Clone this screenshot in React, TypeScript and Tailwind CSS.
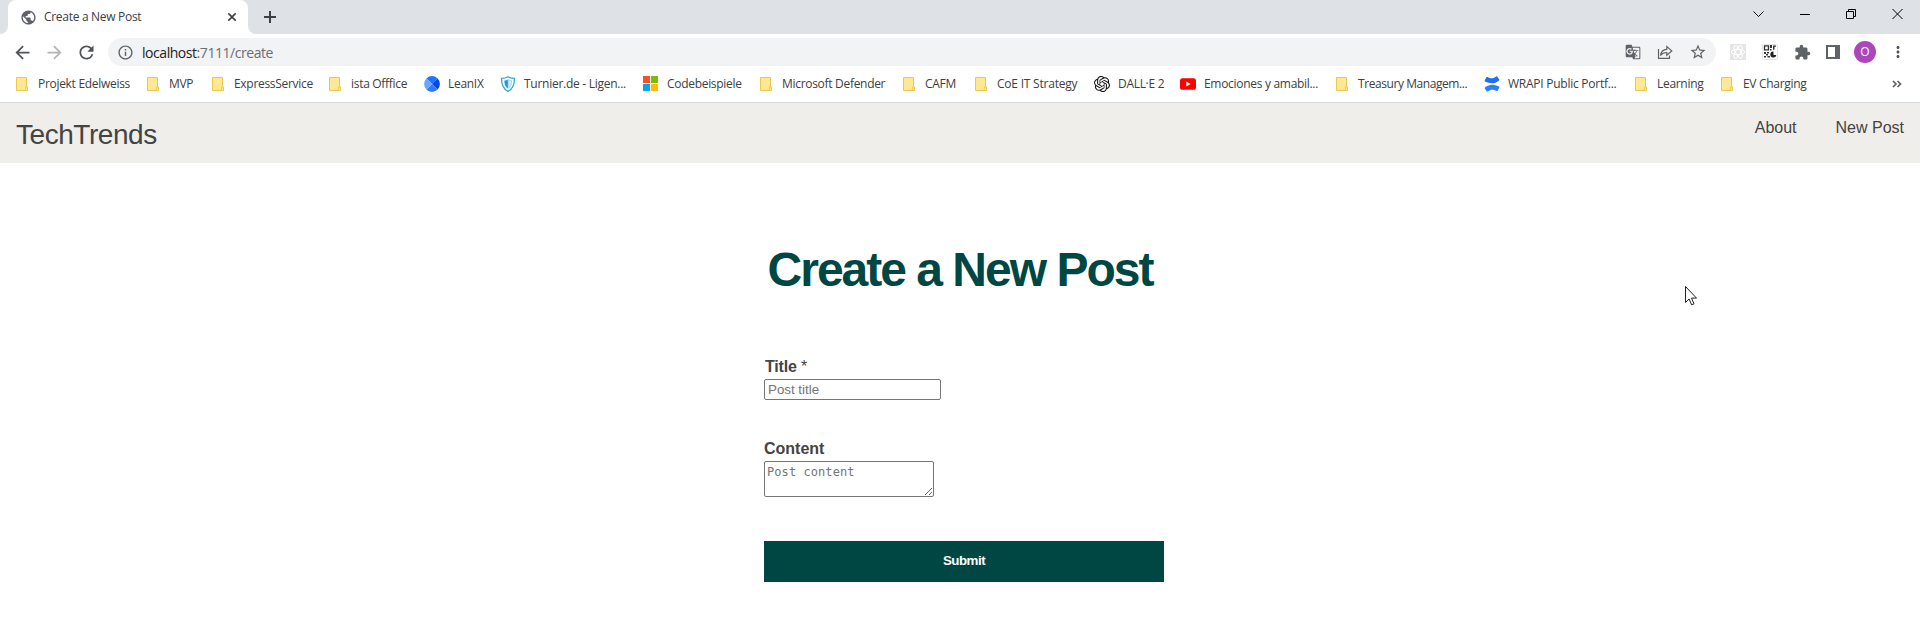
import React from "react";
import { SiOpenai } from "react-icons/si";
import { MdPublic, MdArrowBack, MdArrowForward, MdRefresh, MdInfoOutline, MdStarBorder, MdExtension, MdMoreVert, MdGTranslate } from "react-icons/md";

const Folder = () => (
  <svg width="16" height="16" viewBox="0 0 16 16">
    <path d="M2.500 1.500h10v9.500h1v3.500h-11z" fill="#ffe793" stroke="#ebc84d" />
    <path d="M11.500 14.500v-3.500h2v3.500z" fill="#ffe793" stroke="#ebc84d" strokeWidth="0.8" />
  </svg>
);

const LeanIX = () => (
  <svg width="16" height="16" viewBox="0 0 16 16">
    <clipPath id="lean"><circle cx="8" cy="8" r="7.900" /></clipPath>
    <g clipPath="url(#lean)">
      <path d="M0 0h16L8 8z" fill="#1f74ff" />
      <path d="M16 0v16L8 8z" fill="#0546e8" />
      <path d="M0 16h16L8 8z" fill="#2f7bff" />
      <path d="M0 0v16l8-8z" fill="#66a8ff" />
    </g>
  </svg>
);

const Shield = () => (
  <svg width="16" height="16" viewBox="0 0 16 16">
    <path d="M8 .8C6 2 3.500 2.400 1.500 2.400 1.500 9 3.500 13 8 15.300c4.500-2.300 6.500-6.300 6.500-12.900C12.500 2.400 10 2 8 .8z" fill="#fff" stroke="#35a3df" strokeWidth="1.300" />
    <path d="M8 3.500C7 4.200 5.500 4.500 4.300 4.500 4.400 8.500 5.500 11 8 12.500z" fill="#1e96dc" />
    <path d="M8 3.500c1 .7 2.500 1 3.700 1-.1 4-1.200 6.500-3.700 8z" fill="#d4ecf8" stroke="#7cc3ea" strokeWidth="0.600" />
  </svg>
);

const Microsoft = () => (
  <svg width="16" height="16" viewBox="0 0 16 16">
    <path d="M0 0h7v7H0z" fill="#f8511d" />
    <path d="M8 0h7v7H8z" fill="#80bb01" />
    <path d="M0 8h7v7H0z" fill="#02a5f0" />
    <path d="M8 8h7v7H8z" fill="#ffba02" />
  </svg>
);

const YouTube = () => (
  <svg width="16" height="16" viewBox="0 0 16 16">
    <rect x="0" y="2.200" width="16" height="11.600" rx="2.600" fill="#f00" />
    <path d="M6.300 5.600v4.800L10.600 8z" fill="#fff" />
  </svg>
);

const Confluence = () => (
  <svg width="16" height="16" viewBox="0 0 16 16">
    <path d="M.6 4.700 2.300 1.300c.2-.4.600-.5 1-.3 4 2 5.400 1.700 9-.6.400-.2.800-.1 1 .3l2 2.800c.2.400.1.700-.2.900C10.500 8 7 8.100 1 5.600c-.4-.2-.6-.5-.4-.9z" fill="#1f6ff0" />
    <path d="M15.400 11.300l-1.700 3.400c-.2.400-.6.500-1 .3-4-2-5.400-1.700-9 .6-.4.200-.8.100-1-.3l-2-2.800c-.2-.4-.1-.7.200-.9 4.600-3.600 8.100-3.700 14.100-1.200.4.200.6.500.4.900z" fill="#2980ff" />
  </svg>
);

const OpenAI = () => <SiOpenai size={16} color="#111" />;

const bookmarks = [
  { label: "Projekt Edelweiss", icon: Folder, cls: "w-[131px]" },
  { label: "MVP", icon: Folder, cls: "w-[65px]" },
  { label: "ExpressService", icon: Folder, cls: "w-[117px]" },
  { label: "ista Offfice", icon: Folder, cls: "w-[97px] tracking-[-0.2px]" },
  { label: "LeanIX", icon: LeanIX, cls: "w-[76px]" },
  { label: "Turnier.de - Ligen...", icon: Shield, cls: "w-[143px] tracking-[-0.27px]" },
  { label: "Codebeispiele", icon: Microsoft, cls: "w-[115px]" },
  { label: "Microsoft Defender", icon: Folder, cls: "w-[143px]" },
  { label: "CAFM", icon: Folder, cls: "w-[72px]" },
  { label: "CoE IT Strategy", icon: Folder, cls: "w-[121px] tracking-[-0.22px]" },
  { label: "DALL·E 2", icon: OpenAI, cls: "w-[86px]" },
  { label: "Emociones y amabil...", icon: YouTube, cls: "w-[154px]" },
  { label: "Treasury Managem...", icon: Folder, cls: "w-[150px] tracking-[-0.43px]" },
  { label: "WRAPI Public Portf...", icon: Confluence, cls: "w-[149px] tracking-[-0.25px]" },
  { label: "Learning", icon: Folder, cls: "w-[86px]" },
  { label: "EV Charging", icon: Folder, cls: "w-[100px] tracking-[-0.2px]" },
];

const TabStrip = () => (
  <div className="flex h-[34px] bg-[#dee1e6]">
    <svg className="self-end" width="8" height="8" viewBox="0 0 8 8"><path d="M8 0v8H0a8 8 0 0 0 8-8z" fill="#fff" /></svg>
    <div className="flex h-full w-[240px] items-center rounded-t-lg bg-white pl-3 pr-[12px]">
      <MdPublic size={17} color="#5f6368" />
      <span className="ml-[7px] text-[12px] tracking-[-0.3px] text-[#3c4043]">Create a New Post</span>
      <svg className="ml-auto" width="8" height="8" viewBox="0 0 8 8" stroke="#3c4043" strokeWidth="1.600"><path d="M.3.3l7.400 7.400M7.700.3L.3 7.700" /></svg>
    </div>
    <svg className="self-end" width="8" height="8" viewBox="0 0 8 8"><path d="M0 0v8h8a8 8 0 0 1-8-8z" fill="#fff" /></svg>
    <svg className="ml-[8px] mt-[11px]" width="12" height="12" viewBox="0 0 12 12" stroke="#3c4043" strokeWidth="2"><path d="M6 0v12M0 6h12" /></svg>
    <div className="ml-auto mr-[17px] flex items-start gap-[36px] pt-[9px] text-black">
      <svg width="11" height="10" viewBox="0 0 11 10" fill="none" stroke="currentColor"><path d="M.5 2.500l5 5 5-5" /></svg>
      <svg width="10" height="10" viewBox="0 0 10 10" fill="none" stroke="currentColor"><path d="M0 5.500h10" /></svg>
      <svg width="10" height="10" viewBox="0 0 10 10" fill="none" stroke="currentColor"><path d="M.5 2.500h7v7h-7zM2.500 2V.5h7v7H8" /></svg>
      <svg width="11" height="10" viewBox="0 0 11 10" fill="none" stroke="currentColor"><path d="M.5 0l10 10M10.500 0L.5 10" /></svg>
    </div>
  </div>
);

const Toolbar = () => (
  <div className="flex h-[36px] items-center bg-white pl-3">
    <MdArrowBack size={21} color="#505357" className="mr-[11px]" />
    <MdArrowForward size={21} color="#b5b5b5" className="mr-[11px]" />
    <MdRefresh size={21} color="#505357" className="mr-[11px]" />
    <div className="flex h-[28px] w-[1608px] items-center rounded-full bg-[#f1f3f4] pl-[9px] pr-[9px]">
      <MdInfoOutline size={17} color="#5f6368" />
      <span className="ml-2 text-[14px] tracking-[-0.45px] text-[#202124]">localhost<span className="text-[#6b6f74]">:7111/create</span></span>
      <div className="ml-auto flex items-center gap-4">
        <MdGTranslate size={16} color="#5f6368" />
        <svg width="16" height="16" viewBox="0 0 16 16" fill="none" stroke="#5f6368" strokeWidth="1.200"><path d="M1.500 5v9.400h11V11.500M3.500 11.500C4 8 6 5.500 9.800 5.300V2.500l5 4.400-5 4.300V8.500C7 8.500 5 9.400 3.500 11.500z" /></svg>
        <MdStarBorder size={18} color="#5f6368" />
      </div>
    </div>
    <div className="ml-[14px] flex items-center">
      <svg width="16" height="16" viewBox="0 0 16 16" className="mr-4"><path d="M0 0h16v16H0z" fill="#e5e5e5" /><g fill="none" stroke="#fff"><ellipse cx="8" cy="8" rx="6.800" ry="2.600" /><ellipse cx="8" cy="8" rx="6.800" ry="2.600" transform="rotate(60 8 8)" /><ellipse cx="8" cy="8" rx="6.800" ry="2.600" transform="rotate(120 8 8)" /></g></svg>
      <svg width="16" height="16" viewBox="0 0 16 16" className="mr-4"><rect x=".5" y=".5" width="15" height="15" rx="1" fill="#fff" stroke="#e3e3e3" /><path d="M2.500 1.800h4v4h-4z" fill="none" stroke="#333" strokeWidth="1.300" /><path d="M8 1h2v3H8zM8 5h1.500v1.500H8zM11 1.500h3v1.300h-1.500v3H11zM2 8h2v2H2zM5 8h2v1.500H5zM4 10h2v1.500H4zM2 12h2v1.500H2zM5.500 12H8v1.500H5.500zM9 8h1v1H9z" fill="#333" /><path d="M11.500 7.600a3 3 0 1 0 2.800 3.400h-2.800z" fill="#222" /></svg>
      <MdExtension size={17} color="#5f6368" className="mr-[15px]" />
      <svg width="14" height="14" viewBox="0 0 14 14" className="mr-[14px]"><path d="M0 0h14v14H0zM2 2v10h7V2z" fill="#5f6368" fillRule="evenodd" /></svg>
      <div className="mr-[13px] flex h-[22px] w-[22px] items-center justify-center rounded-full bg-[#ab47bc] text-[12px] text-white">O</div>
      <MdMoreVert size={18} color="#505357" />
    </div>
  </div>
);

const BookmarksBar = () => (
  <div className="flex h-[33px] items-center border-b border-[#d5d8da] bg-white pb-[5px] pl-[14px] pt-px">
    {bookmarks.map(({ label, icon: Icon, cls }) => (
      <div key={label} className={`flex shrink-0 items-center gap-2 tracking-[-0.3px] ${cls}`}>
        <span className="shrink-0"><Icon /></span>
        <span className="whitespace-nowrap text-[12px] text-[#3c4043]">{label}</span>
      </div>
    ))}
    <svg className="ml-auto mr-[18px]" width="10" height="8" viewBox="0 0 10 8" fill="none" stroke="#5f6368" strokeWidth="1.700"><path d="M1 1l3 3-3 3M5.500 1l3 3-3 3" /></svg>
  </div>
);

export default function App() {
  return (
    <div className="relative h-[629px] w-[1920px] overflow-hidden bg-white font-['Liberation_Sans',Arial,sans-serif] text-[#444]">
      <div className="font-['Open_Sans','Noto_Sans',sans-serif]">
        <TabStrip />
        <Toolbar />
        <BookmarksBar />
      </div>
      <nav className="flex h-[60px] justify-between bg-[#f0eeea] px-4">
        <a className="pt-[11px] text-[28px] leading-[42px] tracking-[-0.45px]">TechTrends</a>
        <div className="flex gap-[39px] pt-3 text-base leading-[25px]">
          <a>About</a>
          <a>New Post</a>
        </div>
      </nav>
      <h1 className="mt-[71px] text-center text-[48px] font-bold leading-[72px] tracking-[-2px] text-[#004643]">Create a New Post</h1>
      <form className="ml-[764px] mt-[48px] w-[400px]">
        <label className="block pl-px text-base leading-[25px]"><b className="tracking-[-0.2px]">Title</b> *</label>
        <input placeholder="Post title" className="block h-[21px] w-[177px] rounded-[2px] border border-[#767676] px-[3px] text-[13.333px] placeholder:text-[#757575]" />
        <label className="mt-[36px] block text-base font-bold leading-[25px]">Content</label>
        <textarea placeholder="Post content" className="block h-[36px] w-[170px] rounded-[2px] border border-[#767676] px-[2px] py-[2px] font-['DejaVu_Sans_Mono',monospace] text-[12px] leading-[16px] tracking-[0.07px] placeholder:text-[#757575]" />
        <button type="button" className="mt-[44px] block h-[41px] w-full bg-[#004643] pb-[2px] text-[13.333px] font-bold tracking-[-0.5px] text-white">Submit</button>
      </form>
      <svg className="absolute left-[1684px] top-[285px]" width="14" height="22" viewBox="0 0 14 22"><path d="M1.500 1.500v16l3.600-3.500 2.500 5.800 2.400-1-2.500-5.700h5z" fill="#fff" stroke="#222" /></svg>
    </div>
  );
}
